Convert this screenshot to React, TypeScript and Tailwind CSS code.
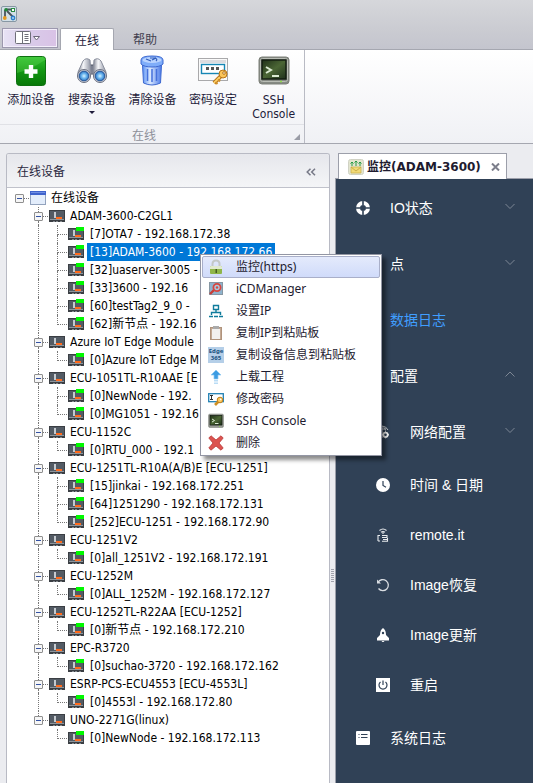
import type { ReactNode } from 'react';

const uiFont = "font-['DejaVu_Sans_Condensed','Noto_Sans_CJK_SC',sans-serif]";

/* ---------- ribbon icons ---------- */

function AppLogo() {
  return (
    <svg width="16" height="16" viewBox="0 0 16 16" aria-hidden="true">
      <rect x="0.5" y="0.5" width="15" height="15" rx="1.5" fill="#d3e0e7" stroke="#8797a3" />
      <path d="M4 4v8M6 5l6 6M5 3.500h6" stroke="#4a545c" strokeWidth="1.8" />
      <circle cx="5" cy="3.8" r="1.8" fill="#238a3b" />
      <rect x="10.5" y="2.5" width="3" height="3" fill="#fff" stroke="#2c8b44" />
      <circle cx="3.8" cy="12" r="1.9" fill="#e59a22" />
      <circle cx="12" cy="12" r="2.4" fill="#2d7fca" />
      <circle cx="12" cy="12" r="0.9" fill="#bfe0f8" />
    </svg>
  );
}

function AppMenuIcon() {
  return (
    <svg width="26" height="14" viewBox="0 0 26 14" aria-hidden="true">
      <rect x="0.5" y="0.5" width="15" height="12" rx="1" fill="#fff" stroke="#6e6e78" />
      <path d="M7.5 1v11" stroke="#6e6e78" />
      <path d="M9.500 3.5h4M9.500 5.5h4M9.500 7.5h4M9.500 9.5h4" stroke="#6e6e78" />
      <path d="M18.5 5.5h6l-3 3.5z" fill="#fff" stroke="#6c6878" />
    </svg>
  );
}

function AddIcon() {
  return (
    <svg width="30" height="30" viewBox="0 0 30 30" aria-hidden="true">
      <defs>
        <linearGradient id="addFill" x1="0" y1="0" x2="0" y2="1">
          <stop offset="0" stopColor="#2fc02f" />
          <stop offset="0.5" stopColor="#139613" />
          <stop offset="1" stopColor="#087808" />
        </linearGradient>
      </defs>
      <rect x="0.5" y="0.5" width="29" height="29" rx="3" fill="url(#addFill)" stroke="#0d700f" />
      <path d="M1 17Q14 14 29 4V2Q28 1 26 1H3Q1 1 1 3z" fill="#6fe060" opacity=".3" />
      <path d="M15 9v13M8.500 15.500h13" stroke="#fff" strokeWidth="4.400" />
    </svg>
  );
}

function BinocularsIcon() {
  return (
    <svg width="32" height="30" viewBox="0 0 32 30" aria-hidden="true">
      <defs>
        <linearGradient id="tube" x1="0" y1="0" x2="1" y2="0">
          <stop offset="0" stopColor="#7c808e" />
          <stop offset="0.4" stopColor="#f6f7fa" />
          <stop offset="1" stopColor="#8c91a0" />
        </linearGradient>
        <radialGradient id="lens">
          <stop offset="0" stopColor="#d6f1ff" />
          <stop offset="0.55" stopColor="#65b2ec" />
          <stop offset="1" stopColor="#2f70bf" />
        </radialGradient>
      </defs>
      <rect x="12" y="9" width="8" height="9" rx="2" fill="#7b8090" stroke="#4d5262" />
      <path d="M7 5Q10 1 14 4L15 18Q12 26 2 21L2 16z" fill="url(#tube)" stroke="#8a8f9d" />
      <path d="M25 5Q22 1 18 4L17 18Q20 26 30 21L30 16z" fill="url(#tube)" stroke="#8a8f9d" />
      <circle cx="8" cy="20" r="6.500" fill="#c4c8d3" stroke="#6b7080" />
      <circle cx="24" cy="20" r="6.500" fill="#c4c8d3" stroke="#6b7080" />
      <circle cx="8" cy="20" r="4.800" fill="url(#lens)" stroke="#27599a" />
      <circle cx="24" cy="20" r="4.800" fill="url(#lens)" stroke="#27599a" />
    </svg>
  );
}

function TrashIcon() {
  return (
    <svg width="24" height="31" viewBox="0 0 24 31" aria-hidden="true">
      <defs>
        <linearGradient id="can" x1="0" y1="0" x2="1" y2="0">
          <stop offset="0" stopColor="#5b92f4" />
          <stop offset="0.4" stopColor="#dceaff" />
          <stop offset="1" stopColor="#4a7ae8" />
        </linearGradient>
      </defs>
      <path d="M2.500 10h19l-1 18Q12 32 3.500 28z" fill="url(#can)" stroke="#3d68d0" />
      <path d="M7.500 14v12M12 14v13M16.500 14v12" stroke="#4672dc" strokeWidth="1.500" />
      <path d="M1 5Q1 1 12 1T23 5V9Q20 12 12 12T1 9z" fill="#7fadf9" stroke="#3d68d0" />
      <ellipse cx="12" cy="5" rx="9.500" ry="3" fill="#bad4ff" />
      <path d="M6 4l5 2M10 3h5q3 1 1 3M12 5l4-2" stroke="#315dbb" strokeWidth="1.200" fill="none" />
    </svg>
  );
}

function PasswordIcon() {
  return (
    <svg width="30" height="28" viewBox="0 0 30 28" aria-hidden="true">
      <rect x="0.500" y="1.500" width="29" height="22" fill="#fafafa" stroke="#a9a9ab" />
      <path d="M2 3h26v3H2z" fill="#dcdcdf" />
      <rect x="3.500" y="7.500" width="23" height="9" fill="#fff" stroke="#1686b4" strokeWidth="1.400" />
      <path d="M8 10h3v3H8zM13 10h3v3h-3zM18 10h3v3h-3z" fill="#555" />
      <path d="M23 19l-7 7" stroke="#b77418" strokeWidth="4" />
      <path d="M23 19l-7 7" stroke="#ffd26a" strokeWidth="2" />
      <circle cx="25" cy="17" r="4" fill="#fbc55a" stroke="#b77418" />
      <circle cx="26" cy="16" r="1.300" fill="#fff" stroke="#b77418" />
      <path d="M17.500 25l2 2M20 22.500l2 2" stroke="#d18f2b" strokeWidth="2" />
    </svg>
  );
}

function ConsoleIcon({ size }: { size: number }) {
  return (
    <svg width={size} height={size} viewBox="0 0 32 30" className="shrink-0" aria-hidden="true">
      <defs>
        <linearGradient id="screen" x1="0" y1="0" x2="1" y2="1">
          <stop offset="0" stopColor="#1f3018" />
          <stop offset="0.5" stopColor="#4b6635" />
          <stop offset="1" stopColor="#1f301c" />
        </linearGradient>
      </defs>
      <rect x="1" y="1" width="30" height="27" rx="3" fill="#868a84" stroke="#7c8079" />
      <rect x="2.500" y="2.500" width="27" height="23" rx="2" fill="none" stroke="#b9bdb5" />
      <rect x="4" y="4" width="24" height="19" fill="url(#screen)" stroke="#121c10" strokeWidth="1.400" />
      <path d="M8 11l5 3-5 3M14 20h7" stroke="#dcebd3" strokeWidth="2" fill="none" />
      <circle cx="23" cy="25.500" r="1" fill="#8fe048" />
    </svg>
  );
}

/* ---------- tree icons ---------- */

function WindowIcon() {
  return (
    <svg width="16" height="16" viewBox="0 0 16 16" className="ml-px shrink-0" aria-hidden="true">
      <rect x="0.500" y="1.500" width="15" height="13" fill="#e3edfb" stroke="#93a3bd" />
      <path d="M0 1h16v4H0z" fill="#3f63cc" />
      <path d="M1 2h14v1H1z" fill="#6f8fe4" />
    </svg>
  );
}

function DeviceIcon({ online }: { online?: boolean }) {
  return (
    <svg width="16" height="14" viewBox="0 0 16 14" className="ml-px shrink-0" aria-hidden="true">
      <rect x="0" y="1" width="16" height="12" fill="#3a3e43" />
      <rect x="1" y="2" width="14" height="9" fill="#535b64" />
      <path d="M5 3h2v6H5z" fill="#c5cacf" />
      <path d="M1 10h14v1H1z" fill="#8f959b" />
      <path d="M7 8h6v2H7z" fill="#ff6a1c" />
      <path d="M4 12h2v1H4zM7 12h2v1H7zM11 12h2v1h-2z" fill="#83888c" />
      {online && <path d="M8 0h8v4H8z" fill="#00f800" />}
    </svg>
  );
}

/* ---------- device tree ---------- */

type Device = { name: string; selected?: boolean };
type Group = { name: string; devices: Device[] };

const groups: Group[] = [
  {
    name: 'ADAM-3600-C2GL1',
    devices: [
      { name: '[7]OTA7 - 192.168.172.38' },
      { name: '[13]ADAM-3600 - 192.168.172.66', selected: true },
      { name: '[32]uaserver-3005 -' },
      { name: '[33]3600 - 192.16' },
      { name: '[60]testTag2_9_0 -' },
      { name: '[62]新节点 - 192.16' },
    ],
  },
  { name: 'Azure IoT Edge Module', devices: [{ name: '[0]Azure IoT Edge M' }] },
  {
    name: 'ECU-1051TL-R10AAE [E',
    devices: [{ name: '[0]NewNode - 192.' }, { name: '[0]MG1051 - 192.16' }],
  },
  { name: 'ECU-1152C', devices: [{ name: '[0]RTU_000 - 192.1' }] },
  {
    name: 'ECU-1251TL-R10A(A/B)E [ECU-1251]',
    devices: [
      { name: '[15]jinkai - 192.168.172.251' },
      { name: '[64]1251290 - 192.168.172.131' },
      { name: '[252]ECU-1251 - 192.168.172.90' },
    ],
  },
  { name: 'ECU-1251V2', devices: [{ name: '[0]all_1251V2 - 192.168.172.191' }] },
  { name: 'ECU-1252M', devices: [{ name: '[0]ALL_1252M - 192.168.172.127' }] },
  { name: 'ECU-1252TL-R22AA [ECU-1252]', devices: [{ name: '[0]新节点 - 192.168.172.210' }] },
  { name: 'EPC-R3720', devices: [{ name: '[0]suchao-3720 - 192.168.172.162' }] },
  { name: 'ESRP-PCS-ECU4553 [ECU-4553L]', devices: [{ name: '[0]4553l - 192.168.172.80' }] },
  { name: 'UNO-2271G(linux)', devices: [{ name: '[0]NewNode - 192.168.172.113' }] },
];

function Expander({ above, below }: { above?: boolean; below?: boolean }) {
  return (
    <span className="flex h-[18px] w-[19px] shrink-0 items-center">
      <span className="ml-[5px] flex h-full w-[9px] flex-col items-center">
        <span className={`h-[5px] w-px border-l ${above ? 'border-dotted border-[#777]' : 'border-transparent'}`} />
        <button
          type="button"
          aria-label="折叠"
          className="flex h-[9px] w-[9px] shrink-0 items-center justify-center rounded-[1px] border border-[#8f8f8f] bg-[#f6f6f6]"
        >
          <span className="h-px w-[5px] bg-[#3352a4]" />
        </button>
        <span className={`w-px flex-1 border-l ${below ? 'border-dotted border-[#777]' : 'border-transparent'}`} />
      </span>
      <span className="flex-1 border-t border-dotted border-[#777]" />
    </span>
  );
}

function Branch({ last }: { last: boolean }) {
  return (
    <span className="flex h-[18px] w-[19px] shrink-0 flex-col pl-[9px]">
      <span className="h-[10px] border-b border-l border-dotted border-[#777]" />
      {!last && <span className="flex-1 border-l border-dotted border-[#777]" />}
    </span>
  );
}

function DeviceTree() {
  return (
    <ul className="pt-px pl-[3px] text-[12px] leading-[18px] whitespace-nowrap text-black">
      <li>
        <div className="flex h-[18px] items-center">
          <Expander />
          <WindowIcon />
          <span className="pl-[5px]">在线设备</span>
        </div>
        <ul>
          {groups.map((group, gi) => {
            const lastGroup = gi === groups.length - 1;
            return (
              <li key={group.name}>
                <div className="flex h-[18px] items-center pl-[19px]">
                  <Expander above below={!lastGroup} />
                  <DeviceIcon />
                  <span className="pl-[5px]">{group.name}</span>
                </div>
                <ul>
                  {group.devices.map((device, di) => (
                    <li key={device.name} className="relative">
                      <div className="flex h-[18px] items-center pl-[19px]">
                        <span className="flex h-full w-[19px] shrink-0 pl-[9px]">
                          {!lastGroup && <span className="border-l border-dotted border-[#777]" />}
                        </span>
                        <Branch last={di === group.devices.length - 1} />
                        <DeviceIcon online />
                        <span className={`ml-[3px] px-[3px] ${device.selected ? 'bg-[#0078d7] text-white' : ''}`}>
                          {device.name}
                        </span>
                      </div>
                      {device.selected && <ContextMenu />}
                    </li>
                  ))}
                </ul>
              </li>
            );
          })}
        </ul>
      </li>
    </ul>
  );
}

/* ---------- context menu ---------- */

function MenuIcon({ children }: { children: ReactNode }) {
  return (
    <svg width="16" height="16" viewBox="0 0 16 16" className="shrink-0" aria-hidden="true">
      {children}
    </svg>
  );
}

const menuItems: { label: string; icon: ReactNode }[] = [
  {
    label: '监控(https)',
    icon: (
      <MenuIcon>
        <path d="M4.500 8V5Q4.500 1.500 8 1.500T11.500 5V8" fill="none" stroke="#c3c8c6" strokeWidth="2" />
        <rect x="2" y="7" width="12" height="8" rx="1" fill="#8fb64a" />
        <path d="M2 8q0-1 1-1h10q1 0 1 1v2H2z" fill="#e1eacf" />
        <path d="M7.500 10h1.500v4H7.500z" fill="#465c20" />
      </MenuIcon>
    ),
  },
  {
    label: 'iCDManager',
    icon: (
      <MenuIcon>
        <rect x="1.500" y="1.500" width="13" height="12" fill="#8fb3cd" stroke="#8797a3" />
        <path d="M7 8l-5 5" stroke="#c83c36" strokeWidth="2.400" />
        <circle cx="9" cy="6.500" r="3.600" fill="#a8cbe0" stroke="#d8463f" strokeWidth="1.800" />
        <circle cx="9" cy="6.500" r="1.200" fill="#d8463f" />
      </MenuIcon>
    ),
  },
  {
    label: '设置IP',
    icon: (
      <MenuIcon>
        <path
          d="M5.500 2.500h5v4h-5zM8 6.500v3M3.500 12V9.500h9V12M1 13.500h4M6 13.500h4M11 13.500h4"
          fill="none"
          stroke="#107c9c"
          strokeWidth="1.400"
        />
      </MenuIcon>
    ),
  },
  {
    label: '复制IP到粘贴板',
    icon: (
      <MenuIcon>
        <rect x="2.500" y="2.500" width="11" height="12" fill="#c3a994" stroke="#b0937c" />
        <rect x="4" y="4" width="8" height="10" fill="#f2f0ee" />
        <rect x="5" y="1" width="6" height="3" fill="#aaa" />
      </MenuIcon>
    ),
  },
  {
    label: '复制设备信息到粘贴板',
    icon: (
      <span className="flex h-4 w-4 shrink-0 flex-col items-center justify-center bg-[#b5cfe8] text-[6px] leading-[7px] font-bold text-[#17507f]">
        <span>Edge</span>
        <span>365</span>
      </span>
    ),
  },
  {
    label: '上载工程',
    icon: (
      <MenuIcon>
        <path d="M8 1l5 5h-3v4H6V6H3z" fill="#3d9ce2" stroke="#8cc8f2" strokeWidth=".7" />
        <path d="M6 11h4v1.500H6zM6 13.500h4V15H6z" fill="#b9dcf5" />
      </MenuIcon>
    ),
  },
  {
    label: '修改密码',
    icon: (
      <MenuIcon>
        <rect x="0.700" y="2.700" width="14.600" height="8" fill="#fff" stroke="#2181b4" strokeWidth="1.300" />
        <path d="M2 4.500h3M3.500 4.500v4M2 8.500h3" stroke="#333" />
        <path d="M11 10l-4 4" stroke="#cf9022" strokeWidth="2.600" />
        <circle cx="12" cy="9" r="2.800" fill="#fbc860" stroke="#bf7f1a" />
        <circle cx="12.700" cy="8.400" r=".8" fill="#fff" />
      </MenuIcon>
    ),
  },
  { label: 'SSH Console', icon: <ConsoleIcon size={16} /> },
  {
    label: '删除',
    icon: (
      <MenuIcon>
        <path
          d="M3 .8L8 5l5-4.200L15.200 3 11 8l4.200 5L13 15.200 8 11l-5 4.200L.8 13 5 8 .8 3z"
          fill="#dc5450"
          stroke="#b93838"
          strokeWidth=".8"
        />
      </MenuIcon>
    ),
  },
];

function ContextMenu() {
  return (
    <div
      role="menu"
      className="absolute top-[11px] left-[190px] z-10 w-[182px] border border-[#9396a4] bg-white p-px font-['Noto_Sans','Noto_Sans_CJK_SC',sans-serif] text-[12px] leading-[20px] text-[#1e1b30] shadow-[4px_4px_4px_rgba(0,0,0,0.45)]"
    >
      {menuItems.map((item, i) => (
        <button
          key={item.label}
          type="button"
          role="menuitem"
          className={`flex h-[22px] w-full items-center gap-3 rounded-[2px] border px-[5px] text-left ${
            i === 0 ? 'border-[#a9afc9] bg-linear-to-b from-[#e4eafc] to-[#d0dbfa]' : 'border-transparent'
          }`}
        >
          {item.icon}
          <span>{item.label}</span>
        </button>
      ))}
    </div>
  );
}

/* ---------- web page side navigation ---------- */

function NavIcon({ children }: { children?: ReactNode }) {
  return (
    <svg width="14" height="14" viewBox="0 0 14 14" className="shrink-0" aria-hidden="true">
      {children}
    </svg>
  );
}

type NavItem = { label: string; sub?: boolean; short?: boolean; active?: boolean; arrow?: 'up' | 'down'; icon?: ReactNode };

const navItems: NavItem[] = [
  {
    label: 'IO状态',
    arrow: 'down',
    icon: (
      <>
        <circle cx="7" cy="7" r="5" fill="none" stroke="#fff" strokeWidth="4" />
        <path d="M7 0v4M7 10v4M0 7h4M10 7h4" stroke="#304156" strokeWidth="1.600" />
      </>
    ),
  },
  { label: '点', arrow: 'down' },
  { label: '数据日志', active: true },
  { label: '配置', arrow: 'up' },
  {
    label: '网络配置',
    sub: true,
    arrow: 'down',
    icon: (
      <>
        <path d="M6 .700a6.300 6.300 0 0 0 0 12.600M6 1v12M1 7h5M6 1q4 0 6 4M2 4h8M7 1.500q2 1 2.500 4" fill="none" stroke="#d3d7dc" />
        <circle cx="9.500" cy="9.800" r="2.200" fill="none" stroke="#fff" strokeWidth="1.800" />
        <path d="M9.500 6.300v1M9.500 12.300v1M6 9.800h1M12 9.800h1" stroke="#fff" />
      </>
    ),
  },
  {
    label: '时间 & 日期',
    sub: true,
    short: true,
    icon: (
      <>
        <circle cx="7" cy="7" r="7" fill="#fff" />
        <path d="M7 3v4.500l3 1.700" stroke="#304156" strokeWidth="1.200" fill="none" />
      </>
    ),
  },
  {
    label: 'remote.it',
    sub: true,
    short: true,
    icon: (
      <path
        d="M3.500 2.500q3.500-3 7 0M5 4.200q2-1.500 4 0M7 4v2M2 13V7.500h2M2 13h2M6 7.500h5v2H6M7 11.500h4M6 13.300h5.500V10"
        fill="none"
        stroke="#e8ebee"
        strokeWidth="1.100"
      />
    ),
  },
  {
    label: 'Image恢复',
    sub: true,
    short: true,
    icon: (
      <>
        <path d="M2 4.500A5.500 5.500 0 1 1 2.500 10.500" fill="none" stroke="#d9dde2" strokeWidth="1.300" />
        <path d="M1 1.500v4h4z" fill="#d9dde2" />
      </>
    ),
  },
  {
    label: 'Image更新',
    sub: true,
    short: true,
    icon: (
      <>
        <path d="M7 0q3 2 3 7l3 3v2.500H1V10l3-3q0-5 3-7zM5.500 13h3L7 14.500z" fill="#fff" />
        <circle cx="7" cy="5" r="1.200" fill="#304156" />
      </>
    ),
  },
  {
    label: '重启',
    sub: true,
    short: true,
    icon: (
      <>
        <path d="M0 0h14v14H0z" fill="#fff" />
        <path d="M7 2.500v4.500M4.500 4a4 4 0 1 0 5 0" stroke="#304156" strokeWidth="1.200" fill="none" />
      </>
    ),
  },
  {
    label: '系统日志',
    icon: (
      <>
        <rect width="14" height="14" rx="1" fill="#fff" />
        <path d="M2.500 3.500h1M5 3.500h6.500M2.500 6.500h1M5 6.500h6.500" stroke="#304156" strokeWidth="1.200" />
      </>
    ),
  },
];

function SideNav() {
  return (
    <nav className="flex-1 bg-[#304156] pt-px font-['Liberation_Sans','Noto_Sans_CJK_SC',sans-serif] text-[14px] text-white">
      {navItems.map((item) => (
        <a
          key={item.label}
          href="#"
          className={`flex items-center gap-5 pr-[18px] ${item.sub ? 'pl-10' : 'pl-5'} ${
            item.short ? 'h-[50px]' : 'h-14'
          } ${item.active ? 'text-[#409eff]' : ''}`}
        >
          <NavIcon>{item.icon}</NavIcon>
          <span className="flex-1">{item.label}</span>
          {item.arrow && (
            <svg width="10" height="10" viewBox="0 0 10 10" className="mb-1" aria-hidden="true">
              <path d={item.arrow === 'down' ? 'M.5 3L5 7.500 9.500 3' : 'M.5 7.500L5 3l4.500 4.500'} fill="none" stroke="#7d8794" />
            </svg>
          )}
        </a>
      ))}
    </nav>
  );
}

/* ---------- ribbon ---------- */

function RibbonButton({ icon, menu, children }: { icon: ReactNode; menu?: boolean; children: ReactNode }) {
  return (
    <button type="button" className="flex w-[61px] flex-col items-center text-[12px] leading-[14px] text-[#1e1b3a]">
      <span className="flex h-[37px] items-center">{icon}</span>
      <span className="pt-1 whitespace-nowrap">{children}</span>
      {menu && <span className="mt-1 border-x-[3px] border-t-[3px] border-x-transparent border-t-[#1e1b3a]" />}
    </button>
  );
}

function Ribbon() {
  return (
    <header>
      <div className="flex h-[28px] items-center bg-linear-to-b from-[#d6d7db] to-[#cbccd2] pl-[1px]">
        <AppLogo />
      </div>
      <div className="flex h-[22px] items-start border-b border-[#a5a7b0] bg-linear-to-b from-[#cbccd2] to-[#c4c5ce] text-[12px] text-[#42404f]">
        <button
          type="button"
          aria-label="菜单"
          className="ml-0.5 flex h-5 w-14 items-center justify-center border border-[#9c98ae] bg-linear-to-r from-[#e8e3f5] via-[#d9cbe9] to-[#d9c2e6] pr-1 shadow-[inset_0_0_0_1px_#f3eefa]"
        >
          <AppMenuIcon />
        </button>
        <button
          type="button"
          className="ml-0.5 h-[22px] w-[54px] rounded-t-[2px] border border-b-0 border-[#a5a7b0] bg-white pt-0.5 text-[#1e1b3a]"
        >
          在线
        </button>
        <button type="button" className="h-[22px] w-[62px] pt-0.5">
          帮助
        </button>
      </div>
      <div className="flex border-b border-[#a5a7b0] bg-linear-to-b from-white to-[#f0f1f5]">
        <section className="flex w-[305px] flex-col border-r border-[#b9bbc4]">
          <div className="flex h-[74px] pt-0.5 pl-px">
            <RibbonButton icon={<AddIcon />}>添加设备</RibbonButton>
            <RibbonButton icon={<BinocularsIcon />} menu>
              搜索设备
            </RibbonButton>
            <RibbonButton icon={<TrashIcon />}>清除设备</RibbonButton>
            <RibbonButton icon={<PasswordIcon />}>密码设定</RibbonButton>
            <RibbonButton icon={<ConsoleIcon size={32} />}>
              SSH
              <br />
              Console
            </RibbonButton>
          </div>
          <div className="flex h-[19px] items-center border-t border-[#e0e1e6] text-[12px] text-[#8d8f99]">
            <span className="flex-1 pt-[3px] pl-[132px] leading-4">在线</span>
            <svg width="6" height="6" viewBox="0 0 6 6" className="mt-1.5 mr-1" aria-hidden="true">
              <path d="M6 0v6H0z" fill="#9a9ca6" />
            </svg>
          </div>
        </section>
      </div>
    </header>
  );
}

function TabIcon() {
  return (
    <svg width="16" height="16" viewBox="0 0 16 16" aria-hidden="true">
      <rect x="0.500" y="0.500" width="15" height="15" rx="2" fill="#e3e5cf" stroke="#d0d2c4" />
      <path d="M3 8h10v6H3z" fill="#f2da76" stroke="#c9ae48" strokeWidth=".7" />
      <path d="M3 8l5 4 5-4" fill="none" stroke="#c9ae48" />
      <path d="M4 7V3.500M8 7V2.500M12 7V3.500M2.500 4.500L4 3l1.500 1.500M6.500 3.500L8 2l1.500 1.500M10.500 4.500L12 3l1.500 1.500" stroke="#279a43" fill="none" />
    </svg>
  );
}

function SplitterGrip() {
  return (
    <div className="flex w-[5px] shrink-0 flex-col items-center justify-center gap-px pt-[215px]">
      {[0, 1, 2, 3, 4, 5, 6].map((line) => (
        <span key={line} className="h-px w-[3px] bg-[#a0a2ac]" />
      ))}
    </div>
  );
}

export default function App() {
  return (
    <div className={`flex min-h-screen flex-col bg-[#ebecf0] ${uiFont}`}>
      <Ribbon />
      <main className="flex flex-1 pt-[9px] pl-1.5">
        <section className="flex w-[324px] shrink-0 flex-col rounded-t-[3px] border border-b-0 border-[#b8bac4] bg-white">
          <div className="flex h-[34px] items-center justify-between rounded-t-[2px] border-b border-[#c0c2cb] bg-linear-to-b from-[#e6e7ec] to-[#f4f5f7] px-2.5 pt-0.5 text-[12px] text-[#2a2840]">
            <h2>在线设备</h2>
            <button type="button" aria-label="收起" className="pr-[3px]">
              <svg width="10" height="8" viewBox="0 0 10 8" aria-hidden="true">
                <path d="M4.500 .7L1.200 4l3.300 3.300M9 .7L5.700 4 9 7.300" fill="none" stroke="#777987" strokeWidth="1.500" />
              </svg>
            </button>
          </div>
          <DeviceTree />
        </section>
        <SplitterGrip />
        <section className="flex min-w-0 flex-1 flex-col">
          <div className="flex h-[26px] border-b border-[#9c9faa] pl-[3px]">
            <div className="flex h-[26px] w-[169px] items-center border border-b-0 border-[#9c9faa] bg-white pl-[9px] font-['DejaVu_Sans','Noto_Sans_CJK_SC',sans-serif] text-[12px] font-bold text-[#1e1b30]">
              <TabIcon />
              <span className="flex-1 pl-[3px] whitespace-nowrap">监控(ADAM-3600)</span>
              <button type="button" aria-label="关闭" className="pr-1.5">
                <svg width="9" height="8" viewBox="0 0 9 8" aria-hidden="true">
                  <path d="M1 .5l7 7M8 .5l-7 7" stroke="#7c7e8b" strokeWidth="2" />
                </svg>
              </button>
            </div>
          </div>
          <div className="flex flex-1 border-l border-[#9c9faa]">
            <SideNav />
          </div>
        </section>
      </main>
    </div>
  );
}
